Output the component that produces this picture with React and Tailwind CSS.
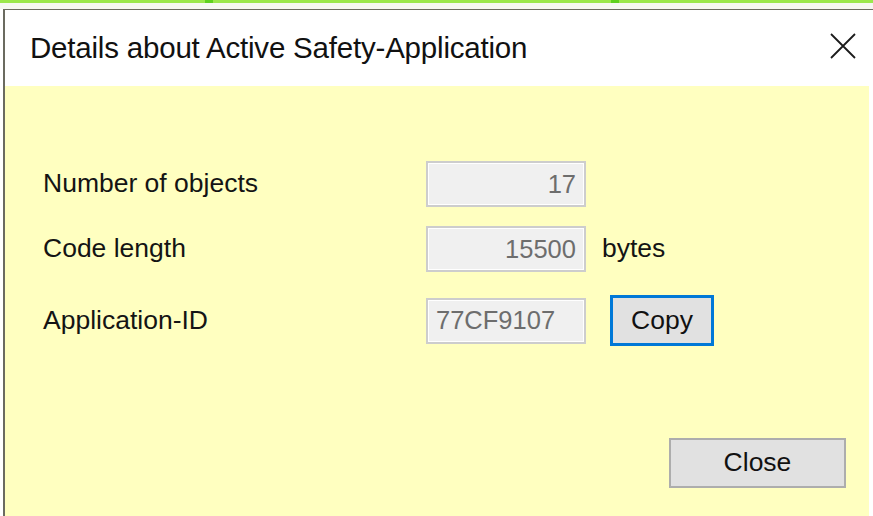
import React from 'react'

const font = { fontFamily: '"Liberation Sans", Arial, sans-serif' }

function Field({ value, align = 'right' }) {
  return (
    <div
      className={`w-[160px] h-[46px] border-2 border-[#cdcdcd] bg-[#f0f0f0] shadow-[inset_0_0_0_1px_#ffffff] flex items-center px-[8px] text-[25.5px] text-[#6d6d6d] ${align === 'right' ? 'justify-end' : 'justify-start'}`}
    >
      {value}
    </div>
  )
}

function Row({ label, children, className = '' }) {
  return (
    <div className={`flex items-center ${className}`}>
      <div className="w-[421px] pl-[38px] text-[26.5px] text-[#141414]">{label}</div>
      {children}
    </div>
  )
}

export default function App() {
  return (
    <div className="w-[873px] h-[516px] bg-white flex flex-col overflow-hidden" style={font}>
      {/* strip of the window behind */}
      <div className="h-[3px] flex">
        <div className="w-[205px] bg-[#9be84c]" />
        <div className="w-[8px] bg-[#5fd11f]" />
        <div className="w-[398px] bg-[#9be84c]" />
        <div className="w-[8px] bg-[#5fd11f]" />
        <div className="flex-1 bg-[#9be84c]" />
      </div>
      <div className="h-[6px] bg-[#f6f8f2]" />

      <div className="flex-1 flex pl-[3px]">
        <div className="flex-1 flex flex-col border-l-2 border-t border-[#6b6b60] bg-white">
          {/* title bar */}
          <div className="h-[76px] flex items-center justify-between pl-[25px] pr-[17px]">
            <span className="text-[29.5px] text-[#111] tracking-[-0.2px]">Details about Active Safety-Application</span>
            <svg width="26" height="26" viewBox="0 0 26 26" className="mb-[4px]">
              <path d="M1 1 L25 25 M25 1 L1 25" stroke="#1b1b1b" strokeWidth="1.8" fill="none" />
            </svg>
          </div>

          {/* body */}
          <div className="flex-1 flex">
            <div className="flex-1 bg-[#ffffc0] flex flex-col">
              <Row label="Number of objects" className="mt-[75px]">
                <Field value="17" />
              </Row>
              <Row label="Code length" className="mt-[19px]">
                <Field value="15500" />
                <span className="ml-[16px] text-[26.5px] text-[#141414]">bytes</span>
              </Row>
              <Row label="Application-ID" className="mt-[23px]">
                <Field value="77CF9107" align="left" />
                <button className="ml-[24px] w-[104px] h-[51px] bg-[#e1e1e1] border-[3px] border-[#0078d7] text-[26.5px] text-[#111] flex items-center justify-center">
                  Copy
                </button>
              </Row>
              <div className="flex-1" />
              <div className="flex justify-end pr-[23px] pb-[28px]">
                <button className="w-[177px] h-[50px] bg-[#e1e1e1] border-2 border-[#adadad] text-[26.5px] text-[#111] flex items-center justify-center">
                  Close
                </button>
              </div>
            </div>
            <div className="w-[4px] bg-white" />
          </div>
        </div>
      </div>
    </div>
  )
}
